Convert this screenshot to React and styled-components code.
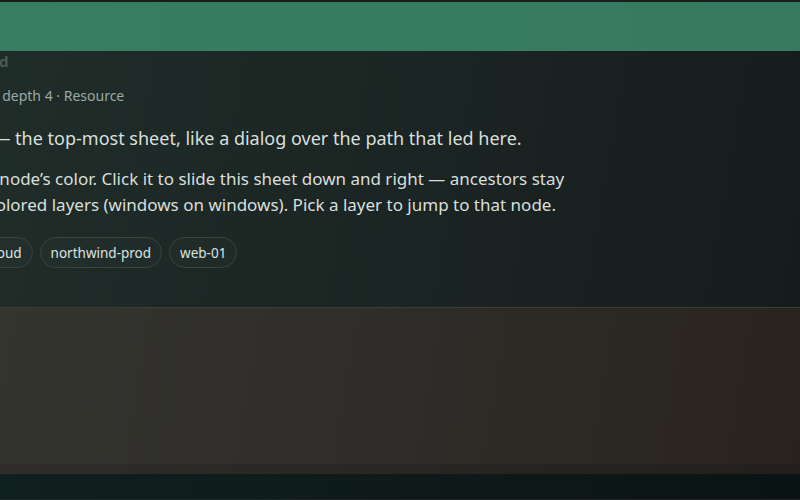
import React from 'react'
import styled, {createGlobalStyle} from "styled-components";

const GlobalStyle = createGlobalStyle`
  html, body {
    margin: 0;
    padding: 0;
    background: #0c1716;
    overflow: hidden;
  }
  body {
    font-family: "Noto Sans", "Open Sans", sans-serif;
  }
`

const Stage = styled.div`
  width: 800px;
  height: 500px;
  box-sizing: border-box;
  overflow: hidden;
  display: flex;
  flex-direction: column;
  border-bottom: 1px solid #1f2625;
  background: linear-gradient(90deg, #10201e 0%, #0d1918 60%, #0a1313 100%);
`

const Sheet = styled.section`
  margin-left: -74px;
  width: 874px;
  height: 305px;
  flex-shrink: 0;
  display: flex;
  flex-direction: column;
  border-top: 2px solid #191d1c;
  background: linear-gradient(100deg, #202e2a 0%, #1b2523 55%, #161c1c 100%);
`

const Strip = styled.div`
  height: 49px;
  flex-shrink: 0;
  background: linear-gradient(90deg, #387e63, #367b61);
`

const Body = styled.div`
  flex: 1;
  display: flex;
  flex-direction: column;
  align-items: flex-start;
`

const Title = styled.h2`
  margin: 0;
  font-size: 15px;
  line-height: 20px;
  font-weight: 700;
  color: #4b5a55;
`

const Meta = styled.div`
  margin-top: 15px;
  font-size: 14px;
  line-height: 20px;
  color: #9aa9a4;
`

const Text = styled.p`
  margin: ${p => p.$lead ? "19px" : "15px"} 0 0;
  max-width: 650px;
  font-size: ${p => p.$lead ? "18px" : "17px"};
  line-height: 26px;
  color: #d9dfdc;
`

const Crumbs = styled.div`
  margin-top: 19px;
  display: flex;
  gap: 7px;
`

const Chip = styled.button`
  height: 31px;
  padding: 0 10px;
  border-radius: 16px;
  border: 1px solid #39443f;
  background: rgba(255, 255, 255, 0.015);
  color: #dde3e0;
  font-family: inherit;
  font-size: 13.5px;
  cursor: pointer;
`

const Layer = styled.div`
  flex-shrink: 0;
  height: ${p => p.$height}px;
  border-top: ${p => p.$edge ? "1px solid #3c3d38" : "none"};
  background: ${p => p.$bg};
`

const crumbs = ["Globex Cloud", "northwind-prod", "web-01"]

const App = () => {
    return (
        <Stage>
            <GlobalStyle/>
            <Sheet>
                <Strip/>
                <Body>
                    <Title>Leaf added</Title>
                    <Meta>Leaf node · depth 4 · Resource</Meta>
                    <Text $lead>
                        web-01 — the top-most sheet, like a dialog over the path that led here.
                    </Text>
                    <Text>
                        Uses the node’s color. Click it to slide this sheet down and right — ancestors stay
                        tiled as colored layers (windows on windows). Pick a layer to jump to that node.
                    </Text>
                    <Crumbs>
                        {crumbs.map(c => <Chip key={c}>{c}</Chip>)}
                    </Crumbs>
                </Body>
            </Sheet>
            <Layer $edge $height={156} $bg="linear-gradient(100deg, #34342f 0%, #2f2d29 50%, #29231f 100%)"/>
            <Layer $height={10} $bg="linear-gradient(90deg, #2e2d29, #241f1c)"/>
        </Stage>
    )
}

export default App
